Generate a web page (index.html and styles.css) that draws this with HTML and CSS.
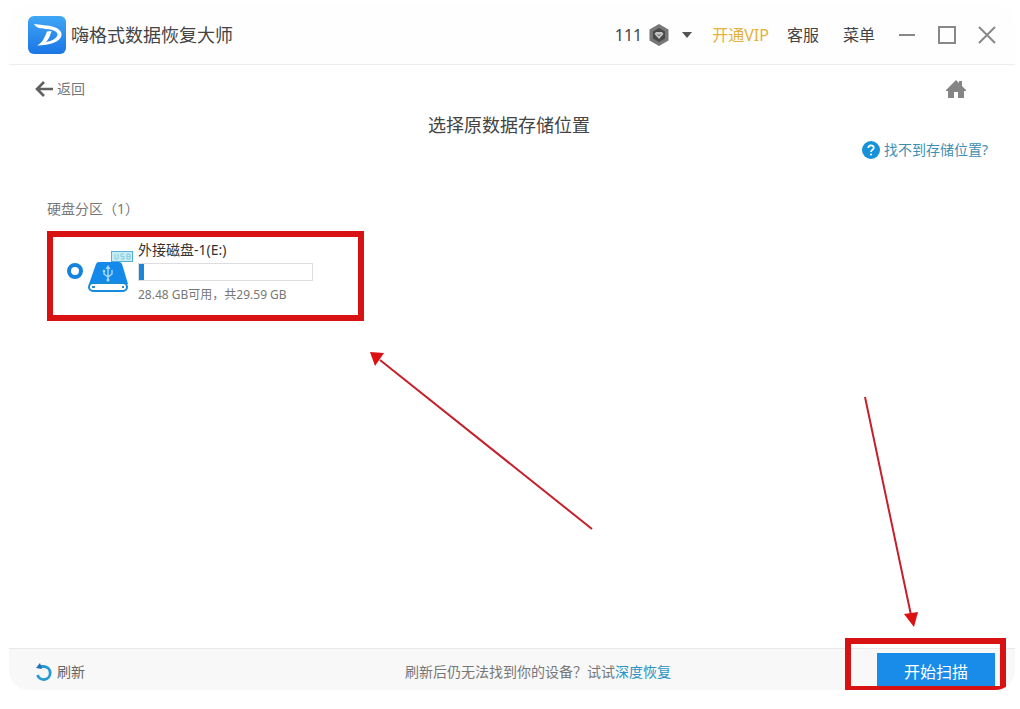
FILE: index.html
```html
<!DOCTYPE html>
<html lang="zh-CN">
<head>
<meta charset="utf-8">
<meta name="viewport" content="width=device-width, initial-scale=1">
<title>嗨格式数据恢复大师</title>
<link rel="stylesheet" href="styles.css">
</head>
<body>
<div class="window">
  <header class="titlebar">
    <svg class="logo" viewBox="0 0 38 38" aria-hidden="true">
      <defs>
        <linearGradient id="logo-fill" x1="0" y1="0" x2="0" y2="1">
          <stop offset="0" stop-color="#3fa6f5"/>
          <stop offset="1" stop-color="#1a76e6"/>
        </linearGradient>
      </defs>
      <rect width="38" height="38" rx="6" fill="url(#logo-fill)"/>
      <path d="M6 8C12 9 20 9 26 11C32 13 35 17 33 21C31 26 22 29 9 29.500C14 27 16 23 19 15.500L23.500 15C22 20 21 23 18 26C24 25 29 22 29.500 19C30 15 24 13.500 18 13C13 12.700 8 12 6 8Z" fill="#fff"/>
    </svg>
    <h1 class="app-name">嗨格式数据恢复大师</h1>
    <nav class="menu">
      <button class="account" type="button">
        <span>111</span>
        <svg class="badge" viewBox="0 0 22 22" aria-hidden="true">
          <path d="M11 0L20.500 5.500V16.500L11 22L1.500 16.500V5.500Z" fill="#777"/>
          <path d="M11 4L17 7.500V14.500L11 18L5 14.500V7.500Z" fill="#484848"/>
          <path d="M8 8H14L15.500 10L11 15L6.500 10Z" fill="#c4c4c4"/>
          <path d="M9.500 10L11 12L12.500 10" fill="none" stroke="#777"/>
        </svg>
        <svg class="caret" viewBox="0 0 10 6" aria-hidden="true"><path d="M0 0H10L5 6Z" fill="#555"/></svg>
      </button>
      <button class="vip" type="button">开通VIP</button>
      <button class="service" type="button">客服</button>
      <button class="more" type="button">菜单</button>
    </nav>
    <div class="controls">
      <button type="button" aria-label="最小化"><svg viewBox="0 0 20 20"><path d="M2 10H18"/></svg></button>
      <button type="button" aria-label="最大化"><svg viewBox="0 0 20 20"><path d="M2 2H18V18H2Z"/></svg></button>
      <button type="button" aria-label="关闭"><svg viewBox="0 0 20 20"><path d="M2 2L18 18M18 2L2 18"/></svg></button>
    </div>
  </header>

  <main class="content">
    <div class="toolbar">
      <button class="back" type="button">
        <svg viewBox="0 0 18 16" aria-hidden="true"><path d="M9 1L2 8L9 15M2 8H18" fill="none" stroke="#606060" stroke-width="2.600"/></svg>
        <span>返回</span>
      </button>
      <button class="home" type="button" aria-label="主页">
        <svg viewBox="0 0 20 20"><path d="M10 1L13 4V2H16V7L20 11V12H18V19H12V13H8V19H2V12H0V11Z" fill="#858585"/></svg>
      </button>
    </div>
    <h2 class="heading">选择原数据存储位置</h2>
    <div class="help-row">
      <a class="help" href="#help">
        <svg viewBox="0 0 18 18" aria-hidden="true">
          <circle cx="9" cy="9" r="9" fill="#1592d8"/>
          <path d="M6.300 7C6.300 3.500 11.800 3.600 11.800 6.800C11.800 8.800 9 8.800 9 11" fill="none" stroke="#fff" stroke-width="1.700"/>
          <circle cx="9" cy="13.500" r="1.100" fill="#fff"/>
        </svg>
        <span>找不到存储位置?</span>
      </a>
    </div>
    <section class="partitions">
      <h3 class="section-title">硬盘分区（1）</h3>
      <label class="disk">
        <input class="disk-radio" type="radio" name="disk" checked>
        <svg class="disk-icon" viewBox="0 0 46 44" aria-hidden="true">
          <rect x="23.500" y="1.500" width="21" height="10" fill="#c5edf3" stroke="#58aedb"/>
          <path d="M27 4V9H30V4M36 4H33V6.500H36V9H33M39 4V9H42V4H39M39 6.500H42" fill="none" stroke="#86cce2"/>
          <path d="M11 12H31Q33 12 34 14L40 34H1L8 14Q9 12 11 12Z" fill="#138ae9"/>
          <rect x="1" y="33" width="38" height="8" rx="4" fill="#fff" stroke="#168bd8" stroke-width="2"/>
          <path d="M4 37H7M34 37H36" stroke="#3487bb" stroke-width="2"/>
          <path d="M20 30V17M16 21V24L20 27L24 24V20" fill="none" stroke="#a9dbfb" stroke-width="1.400"/>
          <path d="M17.500 19L20 15L22.500 19Z" fill="#a9dbfb"/>
          <circle cx="20" cy="30" r="1.600" fill="#a9dbfb"/>
          <circle cx="16" cy="21" r="1.300" fill="#a9dbfb"/>
        </svg>
        <span class="disk-info">
          <span class="disk-name">外接磁盘-1(E:)</span>
          <progress class="disk-usage" value="3" max="100" aria-label="已用空间"></progress>
          <span class="disk-space">28.48 GB可用，共29.59 GB</span>
        </span>
      </label>
    </section>
  </main>

  <footer class="footer">
    <button class="refresh" type="button">
      <svg viewBox="0 0 18 18" aria-hidden="true">
        <path d="M4 3.500H9A6.500 6.500 0 1 1 2.500 12" fill="none" stroke="#2b9ad2" stroke-width="2.800"/>
        <path d="M1 5L5 0L7 6Z" fill="#1a6fc0"/>
      </svg>
      <span>刷新</span>
    </button>
    <p class="hint">刷新后仍无法找到你的设备？试试<a href="#deep">深度恢复</a></p>
    <div class="start-area"><button class="start" type="button">开始扫描</button></div>
  </footer>
</div>

<svg class="arrows" viewBox="0 0 1020 709" aria-hidden="true">
  <path d="M592 529L380 360M865 397L911 615" fill="none" stroke="#c5202c" stroke-width="2"/>
  <path d="M370 352L384 353L375 366ZM914 627L904 614L918 612Z" fill="#dc1212"/>
</svg>
</body>
</html>
```
FILE: styles.css
```css
*,
*::after {
  box-sizing: border-box;
}

body {
  margin: 0;
  min-height: 100vh;
  display: flex;
  padding: 5px 5px 19px 9px;
  position: relative;
  background: #fff;
  color: #444;
  font: 14px/20px "Noto Sans", "Noto Sans CJK SC", sans-serif;
}

h1, h2, h3, p {
  margin: 0;
  font-weight: 400;
}

button {
  padding: 0;
  border: 0;
  background: none;
  color: inherit;
  font: inherit;
  white-space: nowrap;
}

svg {
  display: block;
  flex: none;
}

a {
  color: #2b93c4;
  text-decoration: none;
}

.window {
  flex: 1;
  display: flex;
  flex-direction: column;
  overflow: hidden;
  border-radius: 20px;
  background: #fff;
}

.titlebar {
  display: flex;
  align-items: center;
  height: 60px;
  padding: 0 18px 0 19px;
  border-bottom: 1px solid #ececec;
  background: #fefefe;
}

.logo {
  width: 38px;
  height: 38px;
}

.app-name {
  margin-left: 5px;
  font-size: 18px;
  line-height: 24px;
  color: #444;
}

.menu {
  display: flex;
  align-items: center;
  gap: 24px;
  margin-left: auto;
  font-size: 16px;
}

.account {
  display: flex;
  align-items: center;
  gap: 6px;
}

.badge {
  width: 22px;
  height: 22px;
}

.caret {
  width: 10px;
  height: 6px;
  margin-left: 6px;
}

.vip {
  margin-left: -4px;
  margin-right: -6px;
  color: #e2b23c;
}

.controls {
  display: flex;
  gap: 20px;
  margin-left: 22px;
}

.controls svg {
  width: 20px;
  height: 20px;
  fill: none;
  stroke: #888;
  stroke-width: 2;
}

.content {
  flex: 1;
}

.toolbar {
  display: flex;
  justify-content: space-between;
  align-items: center;
  padding: 14px 49px 0 26px;
}

.back {
  display: flex;
  align-items: center;
  gap: 4px;
  color: #777;
}

.back svg {
  width: 18px;
  height: 16px;
}

.home svg {
  width: 20px;
  height: 20px;
}

.heading {
  margin-top: 14px;
  padding-right: 6px;
  text-align: center;
  font-size: 18px;
  line-height: 24px;
  color: #444;
}

.help-row {
  display: flex;
  justify-content: flex-end;
  padding: 3px 27px 0 0;
}

.help {
  display: flex;
  align-items: center;
  gap: 4px;
  color: #3c8fb5;
}

.help svg {
  width: 18px;
  height: 18px;
}

.partitions {
  padding: 39px 38px 0;
}

.section-title {
  font-size: 14px;
  line-height: 20px;
  color: #777;
}

.disk {
  display: flex;
  align-items: flex-start;
  width: 317px;
  max-width: 100%;
  height: 90px;
  margin-top: 12px;
  padding: 4px 14px;
  border: 6px solid #d81212;
}

.disk-radio {
  appearance: none;
  flex: none;
  width: 16px;
  height: 16px;
  margin: 22px 5px 0 0;
  border: 4px solid #1583dc;
  border-radius: 50%;
  background: #fff;
}

.disk-icon {
  width: 46px;
  height: 44px;
  margin-top: 9px;
}

.disk-info {
  display: flex;
  flex-direction: column;
  margin-left: 4px;
}

.disk-name {
  line-height: 18px;
  color: #333;
}

.disk-usage {
  appearance: none;
  display: block;
  width: 175px;
  height: 18px;
  margin: 4px 0;
  border: 1px solid #ddd;
  background: #fff;
}

.disk-usage::-webkit-progress-bar {
  background: #fff;
}

.disk-usage::-webkit-progress-value {
  background: #1b86d8;
}

.disk-space {
  font-size: 12px;
  line-height: 20px;
  color: #777;
  white-space: nowrap;
}

.footer {
  display: grid;
  grid-template-columns: 1fr auto 1fr;
  height: 42px;
  border-top: 1px solid #e8e8e8;
  background: #f8f8f8;
}

.refresh {
  display: flex;
  align-items: center;
  gap: 4px;
  padding: 4px 0 0 26px;
  color: #666;
}

.refresh svg {
  width: 18px;
  height: 18px;
}

.hint {
  padding: 13px 0 0 52px;
  color: #777;
}

.start-area {
  position: relative;
  display: flex;
  justify-content: flex-end;
  padding: 4px 20px 0 0;
}

.start-area::after {
  content: "";
  position: absolute;
  right: 9px;
  bottom: 0;
  width: 161px;
  height: 52px;
  border: 6px solid #d81212;
  border-bottom-width: 4px;
  pointer-events: none;
}

.start {
  width: 118px;
  background: #198be9;
  color: #fff;
  font-size: 16px;
}

.arrows {
  position: absolute;
  inset: 0;
  width: 100%;
  pointer-events: none;
}
```
